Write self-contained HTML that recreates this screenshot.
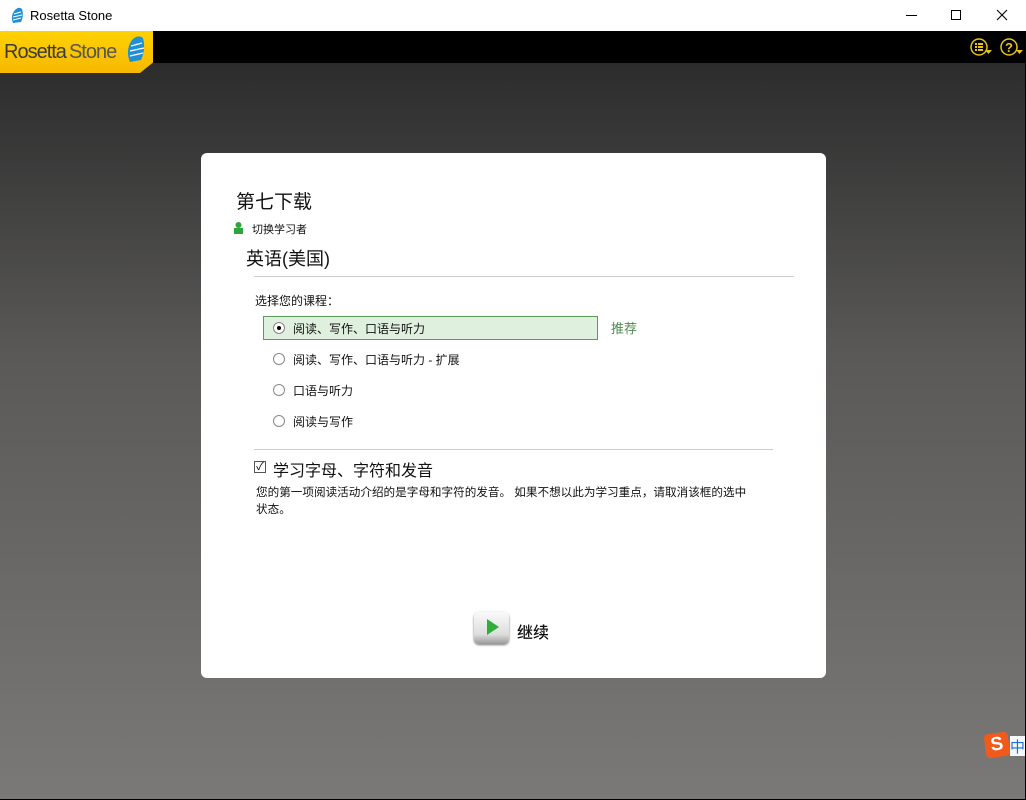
<!DOCTYPE html>
<html><head><meta charset="utf-8"><style>
*{margin:0;padding:0;box-sizing:border-box}
body{width:1026px;height:800px;overflow:hidden;font-family:"Liberation Sans","Noto Sans CJK SC",sans-serif;position:relative;background:#fff}
.tb{position:absolute;left:0;top:0;width:1026px;height:31px;background:#fff;font-size:13px;color:#000}
.bar{position:absolute;left:0;top:31px;width:1026px;height:32px;background:#000}
.bg{position:absolute;left:0;top:63px;width:1025px;height:736px;background:linear-gradient(#2c2c2c,#5a5958 40%,#7b7977)}
.logo{position:absolute;left:0;top:31px;width:153px;height:42px;background:linear-gradient(#ffd200,#f6b800);clip-path:polygon(0 0,100% 0,100% 75%,140px 100%,0 100%)}
.card{position:absolute;left:201px;top:153px;width:625px;height:525px;background:#fff;border-radius:6px}
.t{position:absolute;white-space:nowrap;color:#111}
.radio{position:absolute;width:12px;height:12px;border:1px solid #888;border-radius:50%;background:#fff}
.rl{font-size:12px}
</style></head><body>
<div class="tb">
<svg style="position:absolute;left:10px;top:7px" width="14" height="17" viewBox="0 0 14 17"><path d="M3 16 Q0 9 5 3 Q9 -1 12 2 Q14 9 11 15 Z" fill="#1f8fd6"/><path d="M4 7 L11 5 M3 10 L12 8 M3 13 L11 11" stroke="#fff" stroke-width="1"/></svg>
<span style="position:absolute;left:30px;top:8px">Rosetta Stone</span>
<div style="position:absolute;left:906px;top:15px;width:11px;height:1px;background:#000"></div>
<div style="position:absolute;left:951px;top:10px;width:10px;height:10px;border:1px solid #000"></div>
<svg style="position:absolute;left:996px;top:9px" width="12" height="12"><path d="M1 1L11 11M11 1L1 11" stroke="#000" stroke-width="1.1"/></svg>
</div>
<div class="bar"></div>
<div class="bg"></div>
<div class="logo"><span style="position:absolute;left:4px;top:10px;font-size:20px;color:#3a3a3a;letter-spacing:-1px">Rosetta<span style="margin-left:3px;color:#555">Stone</span></span>
<svg style="position:absolute;left:126px;top:4px" width="20" height="28" viewBox="0 0 20 28"><path d="M4 27 Q-1 15 6 5 Q12 -1 17 3 Q20 14 15 25 Z" fill="#1f8fd6"/><path d="M5 11 L16 8 M4 16 L18 13 M4 21 L17 18" stroke="#fff" stroke-width="1.3"/></svg></div>
<svg style="position:absolute;left:970px;top:37px" width="24" height="20"><circle cx="9" cy="10" r="8" fill="none" stroke="#e8c21a" stroke-width="1.5"/><path d="M5 6h2v2H5zM8 6h5v2H8zM5 9h2v2H5zM8 9h5v2H8zM5 12h2v2H5zM8 12h5v2H8z" fill="#e8c21a"/><path d="M15 13h7l-3.5 4z" fill="#e8c21a"/></svg>
<svg style="position:absolute;left:999px;top:37px" width="26" height="20"><circle cx="10" cy="10" r="8" fill="none" stroke="#e8c21a" stroke-width="1.5"/><text x="6" y="15" font-size="13" font-weight="bold" fill="#e8c21a" font-family="Liberation Sans">?</text><path d="M17 13h7l-3.5 4z" fill="#e8c21a"/></svg>
<div class="card">
<div class="t" style="left:35px;top:34px;font-size:19px">第七下载</div>
<svg style="position:absolute;left:33px;top:69px" width="9" height="12"><circle cx="4.5" cy="3" r="3" fill="#2ea53a"/><rect x="0" y="6" width="9" height="6" fill="#2ea53a"/></svg>
<div class="t" style="left:51px;top:68px;font-size:11px">切换学习者</div>
<div class="t" style="left:45px;top:92px;font-size:18px">英语(美国)</div>
<div style="position:absolute;left:53px;top:123px;width:540px;height:1px;background:#ccc"></div>
<div class="t" style="left:54px;top:139px;font-size:12px">选择您的课程：</div>
<div style="position:absolute;left:62px;top:163px;width:335px;height:24px;background:#dff0de;border:1px solid #5c9a5c"></div>
<div class="radio" style="left:72px;top:169px"><div style="position:absolute;left:3px;top:3px;width:4px;height:4px;border-radius:50%;background:#000"></div></div>
<div class="t rl" style="left:92px;top:167px">阅读、写作、口语与听力</div>
<div class="t" style="left:410px;top:165px;font-size:13px;color:#4d8a4d">推荐</div>
<div class="radio" style="left:72px;top:200px"></div>
<div class="t rl" style="left:92px;top:198px">阅读、写作、口语与听力 - 扩展</div>
<div class="radio" style="left:72px;top:231px"></div>
<div class="t rl" style="left:92px;top:229px">口语与听力</div>
<div class="radio" style="left:72px;top:262px"></div>
<div class="t rl" style="left:92px;top:260px">阅读与写作</div>
<div style="position:absolute;left:53px;top:296px;width:519px;height:1px;background:#ccc"></div>
<div style="position:absolute;left:53px;top:308px;width:12px;height:12px;border:1px solid #555;font-size:11px;line-height:10px;text-align:center">✓</div>
<div class="t" style="left:72px;top:304px;font-size:16px">学习字母、字符和发音</div>
<div class="t" style="left:55px;top:331px;font-size:11.6px;line-height:17px;white-space:normal;width:495px">您的第一项阅读活动介绍的是字母和字符的发音。 如果不想以此为学习重点，请取消该框的选中状态。</div>
<div style="position:absolute;left:273px;top:459px;width:35px;height:32px;border-radius:5px;background:linear-gradient(#fafafa,#ddd 70%,#999);box-shadow:0 1px 2px #777"><svg width="35" height="32"><path d="M13 7 L25 15 L13 23Z" fill="#2fae3a"/></svg></div>
<div class="t" style="left:316px;top:466px;font-size:16px;font-weight:500">继续</div>
</div>
<div style="position:absolute;left:985px;top:733px;width:24px;height:24px;border-radius:4px;background:#f25a1c;transform:rotate(-8deg);color:#fff;font-weight:bold;font-size:19px;text-align:center;line-height:24px">S</div>
<div style="position:absolute;left:1010px;top:736px;width:16px;height:20px;background:#f4f8ff;color:#1c6fd0;font-size:15px">中</div>
<div style="position:absolute;left:1025px;top:31px;width:1px;height:769px;background:#000"></div>
<div style="position:absolute;left:0;top:799px;width:1026px;height:1px;background:#000"></div>
</body></html>
